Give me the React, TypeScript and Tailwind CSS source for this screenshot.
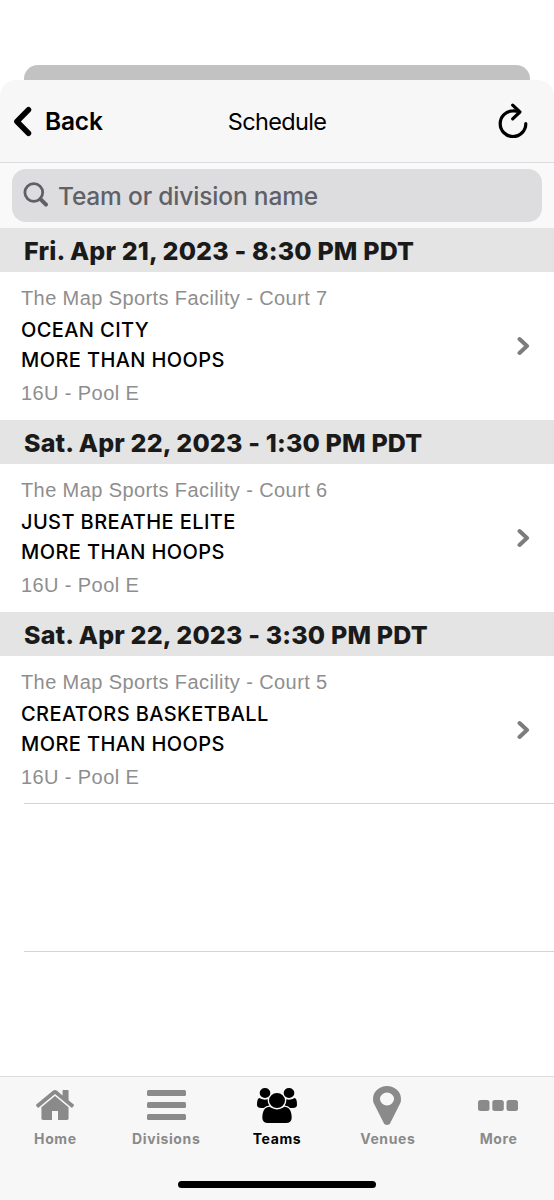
import type { ReactNode } from "react";

interface Game {
  id: number;
  date: string;
  venue: string;
  home: string;
  away: string;
  division: string;
}

const games: Game[] = [
  {
    id: 1,
    date: "Fri. Apr 21, 2023 - 8:30 PM PDT",
    venue: "The Map Sports Facility - Court 7",
    home: "OCEAN CITY",
    away: "MORE THAN HOOPS",
    division: "16U - Pool E",
  },
  {
    id: 2,
    date: "Sat. Apr 22, 2023 - 1:30 PM PDT",
    venue: "The Map Sports Facility - Court 6",
    home: "JUST BREATHE ELITE",
    away: "MORE THAN HOOPS",
    division: "16U - Pool E",
  },
  {
    id: 3,
    date: "Sat. Apr 22, 2023 - 3:30 PM PDT",
    venue: "The Map Sports Facility - Court 5",
    home: "CREATORS BASKETBALL",
    away: "MORE THAN HOOPS",
    division: "16U - Pool E",
  },
];

function HomeIcon() {
  return (
    <svg className="w-[38px] h-[30px]" viewBox="89 253 1614 1283" preserveAspectRatio="none" fill="currentColor">
      <path d="M1472 992v480q0 26-19 45t-45 19h-384v-384h-256v384h-384q-26 0-45-19t-19-45v-480q0-1 .5-3t.5-3l575-474 575 474q1 2 1 6zm223-69l-62 74q-8 9-21 11h-3q-13 0-21-7l-692-577-692 577q-12 8-24 7-13-2-21-11l-62-74q-8-10-7-23.500t11-21.500l719-599q32-26 76-26t76 26l244 204v-195q0-14 9-23t23-9h192q14 0 23 9t9 23v408l219 182q10 8 11 21.500t-7 23.500z" />
    </svg>
  );
}

function BarsIcon() {
  return (
    <svg className="w-[39px] h-[30px]" viewBox="0 0 39 30" fill="currentColor">
      <rect width="39" height="6" rx="1.5" />
      <rect y="12" width="39" height="6" rx="1.5" />
      <rect y="24" width="39" height="6" rx="1.5" />
    </svg>
  );
}

function UsersIcon() {
  return (
    <svg className="w-[40px] h-[35px]" viewBox="0 0 1920 1792" preserveAspectRatio="none" fill="currentColor">
      <path d="M593 896q-162 5-265 128h-134q-82 0-138-40.500t-56-118.500q0-353 124-353 6 0 43.500 21t97.500 42.500 119 21.500q67 0 133-23-5 37-5 66 0 139 81 256zm1071 637q0 120-73 189.500t-194 69.500h-874q-121 0-194-69.500t-73-189.500q0-53 3.500-103.500t14-109 26.500-108.500 43-97.500 62-81 85.500-53.500 111.500-20q10 0 43 21.500t73 48 107 48 135 21.500 135-21.500 107-48 73-48 43-21.500q61 0 111.500 20t85.500 53.500 62 81 43 97.500 26.500 108.500 14 109 3.500 103.500zm-1024-1277q0 106-75 181t-181 75-181-75-75-181 75-181 181-75 181 75 75 181zm704 384q0 159-112.500 271.500t-271.500 112.500-271.500-112.500-112.500-271.500 112.500-271.500 271.500-112.500 271.500 112.500 112.500 271.500zm576 225q0 78-56 118.500t-138 40.500h-134q-103-123-265-128 81-117 81-256 0-29-5-66 66 23 133 23 59 0 119-21.500t97.500-42.500 43.500-21q124 0 124 353zm-128-609q0 106-75 181t-181 75-181-75-75-181 75-181 181-75 181 75 75 181z" />
    </svg>
  );
}

function MarkerIcon() {
  return (
    <svg className="mr-px w-[28px] h-[39px]" viewBox="384 128 1024 1536" preserveAspectRatio="none" fill="currentColor">
      <path d="M1152 640q0-106-75-181t-181-75-181 75-75 181 75 181 181 75 181-75 75-181zm256 0q0 109-33 179l-364 774q-16 33-47.500 52t-67.500 19-67.500-19-46.500-52l-365-774q-33-70-33-179 0-212 150-362t362-150 362 150 150 362z" />
    </svg>
  );
}

function EllipsisIcon() {
  return (
    <svg className="mr-px w-[40px] h-[11px]" viewBox="0 0 40 11" fill="currentColor">
      <rect width="11.500" height="11" rx="2.500" />
      <rect x="14.300" width="11.500" height="11" rx="2.500" />
      <rect x="28.500" width="11.500" height="11" rx="2.500" />
    </svg>
  );
}

const tabs: { label: string; icon: ReactNode; active?: boolean }[] = [
  { label: "Home", icon: <HomeIcon /> },
  { label: "Divisions", icon: <BarsIcon /> },
  { label: "Teams", icon: <UsersIcon />, active: true },
  { label: "Venues", icon: <MarkerIcon /> },
  { label: "More", icon: <EllipsisIcon /> },
];

function Header() {
  return (
    <header className="grid h-[83px] shrink-0 grid-cols-3 items-center rounded-t-[16px] border-b border-[#dcdcde] bg-[#f7f7f7]">
      <button className="flex items-center gap-[13px] pl-[13px] text-left">
        <svg className="h-[32px] w-[19px]" viewBox="0 0 19 32" fill="none" stroke="black" strokeWidth="5.500" strokeLinecap="round" strokeLinejoin="round">
          <path d="M15.500 4.700 3.900 16.500l11.600 11.800" />
        </svg>
        <span className="text-[24.500px] leading-[30px] font-semibold tracking-[-0.2px]">Back</span>
      </button>
      <h1 className="pt-[2px] text-center text-[23.500px] leading-[30px] tracking-[-0.650px]">Schedule</h1>
      <button className="justify-self-end pr-[26px]">
        <svg className="h-[36px] w-[30px]" viewBox="0 0 30 36" fill="none" stroke="black" strokeWidth="3.200" strokeLinecap="round" strokeLinejoin="round">
          <path d="M20.500 8.500C18.500 7.900 17 7.800 15 7.900A12.800 12.800 0 1 0 27.800 20.700" />
          <path d="M14.700 2.200 21.900 9 14.700 15.800" />
        </svg>
      </button>
    </header>
  );
}

function SearchBar() {
  return (
    <div className="h-[65px] shrink-0 bg-[#f9f9fa] px-3 pt-[6px]">
      <div className="flex h-[53px] items-center rounded-[14px] bg-[#dddddf] pl-[11px] text-[#606066]">
        <svg className="h-[27px] w-[27px]" viewBox="0 0 27 27" fill="none" stroke="currentColor" strokeLinecap="round">
          <circle cx="10.800" cy="10.500" r="8.900" strokeWidth="2.800" />
          <path d="m17.500 17.200 5.500 5.500" strokeWidth="4" />
        </svg>
        <span className="ml-[8px] text-[24.500px] leading-[30px] font-medium tracking-[-0.170px]">Team or division name</span>
      </div>
    </div>
  );
}

function GameSection({ game }: { game: Game }) {
  return (
    <section>
      <h2 className="flex h-[44px] items-center bg-[#e4e4e4] pt-[3px] pl-[24px] text-[25px] font-extrabold tracking-[0.160px] whitespace-nowrap text-[#1a1a1a]">
        {game.date}
      </h2>
      <div className="flex h-[148px] items-center justify-between pr-[24px] pl-[21px]">
        <div className="whitespace-nowrap">
          <p className="-mt-px mb-[2px] font-['Liberation_Sans',Arial,sans-serif] text-[20px] leading-[30px] tracking-[0.4px] text-[#8e8e8e]">{game.venue}</p>
          <p className="text-[20px] leading-[30px] font-medium tracking-[0.4px]">{game.home}</p>
          <p className="text-[20px] leading-[30px] font-medium tracking-[0.4px]">{game.away}</p>
          <p className="mt-[3px] font-['Liberation_Sans',Arial,sans-serif] text-[20px] leading-[30px] tracking-[0.4px] text-[#8e8e8e]">{game.division}</p>
        </div>
        <svg className="h-[20px] w-[13px]" viewBox="0 0 13 20" fill="none" stroke="#7c7c7f" strokeWidth="4" strokeLinecap="round" strokeLinejoin="round">
          <path d="m2.500 3 7.500 7-7.500 7" />
        </svg>
      </div>
    </section>
  );
}

function TabBar() {
  return (
    <nav className="mt-auto h-[124px] shrink-0 border-t border-[#dcdcdc] bg-[#f7f7f7]">
      <div className="grid grid-cols-5 pt-[7px]">
        {tabs.map((tab) => (
          <div key={tab.label} className={tab.active ? "flex flex-col items-center text-black" : "flex flex-col items-center text-[#8a8a8a]"}>
            <div className="flex h-[42px] items-center">{tab.icon}</div>
            <span className="mt-[3px] text-[14px] leading-[20px] font-bold tracking-[0.6px]">{tab.label}</span>
          </div>
        ))}
      </div>
      <div className="mx-auto mt-[32px] h-[7px] w-[198px] rounded-full bg-black" />
    </nav>
  );
}

export default function App() {
  return (
    <div className="flex h-[1200px] w-[554px] flex-col overflow-hidden bg-white font-['Inter',sans-serif] text-black">
      <div className="mx-[24px] mt-[65px] h-[15px] shrink-0 rounded-t-[14px] bg-[#c2c2c2]" />
      <Header />
      <SearchBar />
      <main>
        {games.map((game) => (
          <GameSection key={game.id} game={game} />
        ))}
        <div className="-mt-px ml-[24px] h-[149px] border-y border-[#d4d4d6]" />
      </main>
      <TabBar />
    </div>
  );
}
